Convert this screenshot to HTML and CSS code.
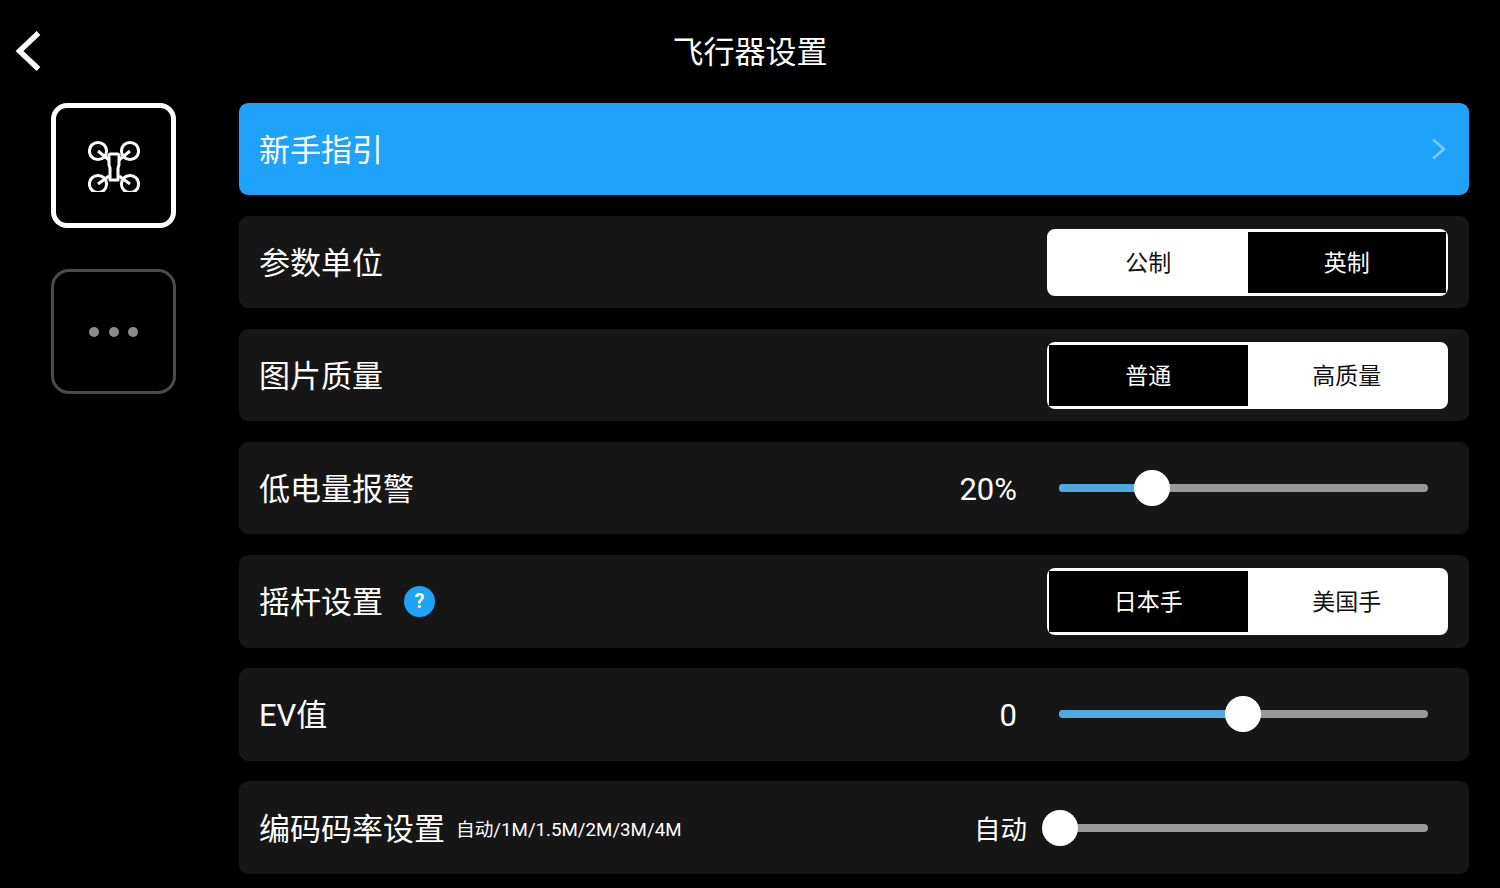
FILE: index.html
```html
<!DOCTYPE html>
<html lang="zh-CN">
<head>
<meta charset="utf-8">
<title>飞行器设置</title>
<link rel="stylesheet" href="styles.css">
</head>
<body>
<div class="page">
  <header class="header">
    <svg class="back" width="26" height="42" viewBox="0 0 26 42"><path d="M23.5 3 L4.5 21 L23.5 39" fill="none" stroke="#fff" stroke-width="5.4"/></svg>
    <h1 class="title">飞行器设置</h1>
  </header>
  <div class="body">
    <nav class="side">
      <div class="tab tab-on">
        <svg width="52" height="52" viewBox="0 0 52 52" fill="none" stroke="#fff" stroke-width="3">
          <circle cx="10" cy="11" r="8.6"/><circle cx="42" cy="11" r="8.6"/>
          <circle cx="10" cy="44" r="8.6"/><circle cx="42" cy="44" r="8.6"/>
          <path d="M10 11 L21 20 M42 11 L31 20 M10 44 L21 36 M42 44 L31 36"/>
          <path d="M22 14 H30 L31 15 V25 L30 28 V40 H22 V28 L21 25 V15 Z" stroke-linejoin="round" fill="#000"/>
        </svg>
      </div>
      <div class="tab tab-off"><i class="dot"></i><i class="dot"></i><i class="dot"></i></div>
    </nav>
    <main class="list">
      <div class="row row-blue">
        <span class="label">新手指引</span>
        <svg class="more" width="16" height="24" viewBox="0 0 16 24"><path d="M2 2.5 L13 12 L2 21.5" fill="none" stroke="#7fcafc" stroke-width="2.6"/></svg>
      </div>
      <div class="row">
        <span class="label">参数单位</span>
        <div class="seg"><span class="opt opt-on">公制</span><span class="opt">英制</span></div>
      </div>
      <div class="row">
        <span class="label">图片质量</span>
        <div class="seg"><span class="opt">普通</span><span class="opt opt-on">高质量</span></div>
      </div>
      <div class="row">
        <span class="label">低电量报警</span>
        <div class="ctl"><span class="val">20%</span>
          <div class="slider"><div class="fill fill-20"></div><div class="thumb thumb-20"></div></div></div>
      </div>
      <div class="row">
        <span class="label">摇杆设置</span><span class="help">?</span>
        <div class="seg"><span class="opt">日本手</span><span class="opt opt-on">美国手</span></div>
      </div>
      <div class="row">
        <span class="label">EV值</span>
        <div class="ctl"><span class="val">0</span>
          <div class="slider"><div class="fill fill-50"></div><div class="thumb thumb-50"></div></div></div>
      </div>
      <div class="row">
        <span class="label">编码码率设置</span><span class="hint">自动/1M/1.5M/2M/3M/4M</span>
        <div class="ctl"><span class="val val-auto">自动</span>
          <div class="slider"><div class="thumb thumb-0"></div></div></div>
      </div>
    </main>
  </div>
</div>
</body>
</html>
```
FILE: styles.css
```css
* { box-sizing: border-box; }
html, body { margin: 0; height: 100%; background: #000; }
body {
  font-family: Roboto, "Noto Sans CJK SC", sans-serif;
  color: #fff;
  overflow: hidden;
}
.page { width: 1500px; height: 888px; }
.header {
  position: relative;
  height: 103px;
  display: flex;
  justify-content: center;
  padding-top: 33px;
}
.back { position: absolute; left: 15px; top: 30px; }
.title { margin: 0; font-size: 31px; font-weight: 400; line-height: 40px; }
.body { display: flex; }
.side {
  width: 239px;
  padding-left: 51px;
  display: flex;
  flex-direction: column;
  gap: 41px;
}
.tab {
  width: 125px;
  height: 125px;
  display: flex;
  align-items: center;
  justify-content: center;
}
.tab-on { border: 5px solid #fff; border-radius: 16px; }
.tab-off { border: 3px solid #4b4b4b; border-radius: 18px; gap: 9.5px; }
.dot { width: 10px; height: 10px; border-radius: 50%; background: #8c8c8c; }
.list { width: 1230px; display: flex; flex-direction: column; gap: 20.78px; }
.row {
  height: 92.3px;
  background: #161616;
  border-radius: 9px;
  padding: 0 21px 0 20px;
  display: flex;
  align-items: center;
}
.row-blue { background: #1fa3fa; }
.label { font-size: 31px; font-weight: 400; line-height: 40px; margin-top: 4px; }
.more { margin-left: auto; margin-right: 1px; margin-top: -1px; }
.seg {
  margin-left: auto;
  width: 401px;
  height: 67px;
  border-style: solid;
  border-color: #fff;
  border-width: 3px 2px;
  border-radius: 8px;
  background: #fff;
  display: flex;
}
.opt {
  flex: 1;
  display: flex;
  align-items: center;
  justify-content: center;
  padding-bottom: 2px;
  background: #000;
  color: #fff;
  font-size: 23px;
  font-weight: 400;
}
.opt-on { background: #fff; color: #111; }
.ctl { margin-left: auto; display: flex; align-items: center; margin-right: 20px; }
.val { font-size: 31px; font-weight: 400; line-height: 40px; margin: 3px 42px 0 0; }
.val-auto { font-size: 26.5px; margin-top: 4px; margin-right: 32px; }
.slider {
  position: relative;
  width: 369px;
  height: 8px;
  border-radius: 4px;
  background: #999;
}
.fill { height: 8px; border-radius: 4px; background: #4ea9dd; }
.fill-20 { width: 93px; }
.fill-50 { width: 184px; }
.thumb {
  position: absolute;
  top: -14px;
  width: 36px;
  height: 36px;
  margin-left: -18px;
  border-radius: 50%;
  background: #fff;
}
.thumb-0 { left: 1px; }
.thumb-20 { left: 93px; }
.thumb-50 { left: 184px; }
.help {
  margin-left: 21px;
  width: 31px;
  height: 31px;
  border-radius: 50%;
  background: #1fa3fa;
  font-size: 20px;
  font-weight: 700;
  display: flex;
  align-items: center;
  justify-content: center;
}
.hint { margin-left: 11px; font-size: 18.7px; font-weight: 400; }
```
